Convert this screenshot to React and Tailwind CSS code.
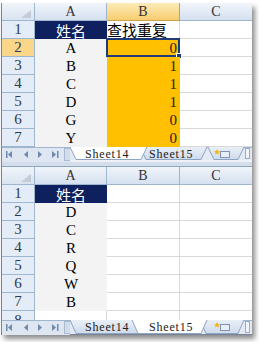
import React from "react";
import clsx from "clsx";

const top = [
  { n: 1, a: "姓名", b: "查找重复" },
  { n: 2, a: "A", b: "0" },
  { n: 3, a: "B", b: "1" },
  { n: 4, a: "C", b: "1" },
  { n: 5, a: "D", b: "1" },
  { n: 6, a: "G", b: "0" },
  { n: 7, a: "Y", b: "0" },
];

const bottom = [
  { n: 1, a: "姓名" },
  { n: 2, a: "D" },
  { n: 3, a: "C" },
  { n: 4, a: "R" },
  { n: 5, a: "Q" },
  { n: 6, a: "W" },
  { n: 7, a: "B" },
];

const cjk = "font-[family-name:'Noto_Sans_CJK_SC',sans-serif]";

const ColHeads = ({ hiB }) => (
  <div className="flex h-[18px] text-[14px] text-[#333]">
    <div className="relative w-[33px] border-r border-b border-[#9eb6ce] bg-gradient-to-b from-[#f1f5fb] to-[#d9e3f0]">
      <svg className="absolute right-[3px] bottom-[2px]" width="10" height="8">
        <polygon points="10,0 10,8 0,8" fill="#c3ccd8" />
      </svg>
    </div>
    <div className="w-[72px] flex items-center justify-center border-r border-b border-[#9eb6ce] bg-gradient-to-b from-[#f1f5fb] to-[#d5e0ef]">A</div>
    <div
      className={clsx(
        "w-[73px] flex items-center justify-center border-r border-b bg-gradient-to-b",
        hiB ? "from-[#fcebb8] to-[#f7cd6e] border-[#c9a24c]" : "from-[#f1f5fb] to-[#d5e0ef] border-[#9eb6ce]"
      )}
    >
      B
    </div>
    <div className="w-[72px] flex items-center justify-center border-b border-[#9eb6ce] bg-gradient-to-b from-[#f1f5fb] to-[#d5e0ef]">C</div>
  </div>
);

const Row = ({ r, orange, hi, sel }) => (
  <div className="flex h-[18px] text-[15px]">
    <div
      className={clsx(
        "w-[33px] flex items-center justify-center border-r border-b border-[#9eb6ce] text-[#2d3a4e]",
        hi ? "bg-[#f9d68a]" : "bg-[#e4ecf7]"
      )}
    >
      {r.n}
    </div>
    {r.n === 1 ? (
      <div className={clsx("w-[72px] flex items-center justify-center bg-[#0e215e] text-white text-[15px] leading-none", cjk)}>
        {r.a}
      </div>
    ) : (
      <div className="w-[72px] flex items-center justify-center bg-[#f3f3f3] text-black">{r.a}</div>
    )}
    {r.n === 1 || !orange ? (
      <div className={clsx("w-[73px] flex items-center border-r border-b border-[#d9d9d9] bg-white text-black text-[15px] leading-none whitespace-nowrap", cjk)}>
        {r.b}
      </div>
    ) : (
      <div className="relative w-[73px] flex items-center justify-end pr-[3px] bg-[#ffc000] text-[#222]">
        {r.b}
        {sel && (
          <div className="absolute -top-[1px] -left-[1px] w-[74px] h-[19px] border-2 border-[#1f3c78]">
            <div className="absolute -bottom-[4px] -right-[4px] w-[6px] h-[6px] bg-[#1f3c78] border border-white" />
          </div>
        )}
      </div>
    )}
    <div className="w-[72px] border-b border-[#d9d9d9] bg-white" />
  </div>
);

const Nav = () => (
  <svg width="68" height="14" className="shrink-0 bg-[#dde6f1]">
    <g fill="#7189ad">
      <rect x="4" y="3" width="1.5" height="7" />
      <polygon points="6,6.5 10,3 10,10" />
      <polygon points="22,6.5 26,3 26,10" />
      <polygon points="40,6.5 36,3 36,10" />
      <polygon points="54,6.5 50,3 50,10" />
      <rect x="55" y="3" width="1.5" height="7" />
    </g>
    <rect x="62.5" y="0.5" width="6" height="12" fill="#d3ddea" stroke="#a9bad1" />
  </svg>
);

const Tab = ({ l, r, h, active }) => (
  <>
    <polygon
      points={`${l},0 ${r},0 ${r - 6},${h - 0.5} ${l + 6},${h - 0.5}`}
      fill={active ? "#ffffff" : "url(#tabg)"}
    />
    <polyline
      points={`${l},0 ${l + 6},${h - 0.5} ${r - 6},${h - 0.5} ${r},0`}
      fill="none"
      stroke="#8ea4c3"
    />
  </>
);

const TabBar = ({ active, h }) => (
  <div className={clsx("flex", h === 13 ? "h-[13px]" : "h-[14px]")}>
    <div className="border-t border-[#9eb6ce] flex">
      <Nav />
    </div>
    <div className="relative w-[182px] bg-[#e3eaf4]">
      <svg className="absolute inset-0" width="182" height={h}>
        <defs>
          <linearGradient id="tabg" x1="0" y1="0" x2="0" y2="1">
            <stop offset="0" stopColor="#e9eff7" />
            <stop offset="1" stopColor="#cfdbeb" />
          </linearGradient>
        </defs>
        <line x1="0" y1="0.5" x2="182" y2="0.5" stroke="#9eb6ce" />
        {active === 14 ? (
          <>
            <Tab l={138} r={174} h={h} />
            <Tab l={70} r={137} h={h} />
            <Tab l={0} r={77} h={h} active />
          </>
        ) : (
          <>
            <Tab l={0} r={77} h={h} />
            <Tab l={130} r={174} h={h} />
            <Tab l={62} r={137} h={h} active />
          </>
        )}
        <rect x="150.5" y="4.5" width="9" height="6" fill="#e8eef6" stroke="#7f93b0" />
        <polygon points="147,2 148,4 150,4.3 148.5,5.6 149,7.6 147,6.5 145,7.6 145.5,5.6 144,4.3 146,4" fill="#f2b814" />
        <rect x="175.5" y="1.5" width="4" height={h - 3} fill="#f0f3f8" stroke="#9aabc3" />
      </svg>
      <div className="relative flex items-center h-full pl-[15px] text-[12px] tracking-[0.8px] text-[#222] leading-none">
        <span className="w-[47px]">Sheet14</span>
        <span className="ml-[17px]">Sheet15</span>
      </div>
    </div>
  </div>
);

export default function App() {
  return (
    <div className="w-[259px] h-[342px] bg-white pt-[3px] pl-[1px] overflow-hidden font-[family-name:'Liberation_Serif',serif]">
      <div className="w-[251px] border-l border-b border-[#77849a] shadow-[3px_4px_5px_rgba(0,0,0,0.45)]">
        <ColHeads hiB />
        {top.map((r) => (
          <Row key={r.n} r={r} orange hi={r.n === 2} sel={r.n === 2} />
        ))}
        <TabBar active={14} h={13} />
        <div className="h-[7px] bg-[#d4deeb] border-t-2 border-[#eef2f8] border-b border-b-[#8ea4c3]" />
        <ColHeads />
        {bottom.map((r) => (
          <Row key={r.n} r={r} />
        ))}
        <div className="h-[9px] overflow-hidden">
          <div className="flex h-[18px] text-[15px]">
            <div className="w-[33px] flex items-center justify-center border-r border-[#9eb6ce] bg-[#e4ecf7] text-[#2d3a4e]">8</div>
            <div className="w-[72px] border-r border-[#d9d9d9]" />
            <div className="w-[73px] border-r border-[#d9d9d9]" />
          </div>
        </div>
        <TabBar active={15} h={14} />
      </div>
    </div>
  );
}
